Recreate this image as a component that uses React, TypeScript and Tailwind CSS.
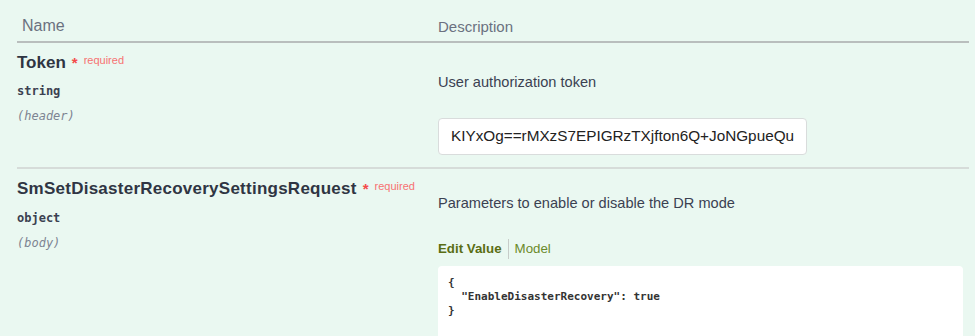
import React from "react";

const sans = "font-['Liberation_Sans',Arial,sans-serif]";
const mono = "font-['DejaVu_Sans_Mono','Liberation_Mono',monospace]";

function Required() {
  return (
    <>
      <span className="ml-1.5 text-[15px] font-bold leading-[22px] text-[#f44b4b]">*</span>
      <span className="ml-1.5 text-[11px] leading-[16px] text-[#f77272]">required</span>
    </>
  );
}

export default function App() {
  return (
    <div className={`${sans} w-[975px] h-[336px] overflow-hidden bg-[#eaf8f1] text-[#3b4151]`}>
      <div className="pl-[17px] pr-[6px]">
        <div className="flex h-[43px] items-end border-b-2 border-[#b9bebd]">
          <div className="w-[421px] pl-[5px] pb-[3px] text-[16px] text-[#6b7180]">Name</div>
          <div className="pb-[3px] text-[15px] text-[#6b7180]">Description</div>
        </div>

        <div className="flex h-[126px] border-b-2 border-[#d6dcd9]">
          <div className="w-[421px] pt-[9px]">
            <div className="flex items-start">
              <span className="text-[17px] font-bold leading-[22px] text-[#2f3543]">Token</span>
              <Required />
            </div>
            <div className={`${mono} mt-[8px] text-[12px] font-bold text-[#3b4151]`}>string</div>
            <div className={`${mono} mt-[7px] text-[12px] italic text-[#7d8492]`}>(header)</div>
          </div>
          <div className="pt-[29px]">
            <div className="text-[14.6px]">User authorization token</div>
            <input
              readOnly
              value="KIYxOg==rMXzS7EPIGRzTXjfton6Q+JoNGpueQuWbX"
              className="mt-[24px] block w-[369px] h-[37px] rounded-[4px] border border-[#d9dcdc] bg-white px-[12px] text-[15.3px] text-[#222] outline-none"
            />
          </div>
        </div>

        <div className="flex">
          <div className="w-[421px] pt-[9px]">
            <div className="flex items-start">
              <span className="text-[17px] font-bold leading-[22px] text-[#2f3543] tracking-[0.25px]">SmSetDisasterRecoverySettingsRequest</span>
              <Required />
            </div>
            <div className={`${mono} mt-[9px] text-[12px] font-bold text-[#3b4151]`}>object</div>
            <div className={`${mono} mt-[7px] text-[12px] italic text-[#7d8492]`}>(body)</div>
          </div>
          <div className="pt-[24px] flex-1">
            <div className="text-[14.6px]">Parameters to enable or disable the DR mode</div>
            <div className="mt-[24px] flex items-center text-[13.3px] leading-[20px]">
              <span className="font-bold text-[#5a6e14]">Edit Value</span>
              <span className="mx-[6px] h-[20px] w-px bg-[#c7ccc9]" />
              <span className="text-[#6a8a2a]">Model</span>
            </div>
            <div className={`${mono} mt-[7px] w-[525px] h-[80px] rounded-[4px] bg-white pl-[10px] pt-[10px] text-[11px] leading-[14px] font-bold text-[#333] whitespace-pre`}>
              {"{\n  \"EnableDisasterRecovery\": true\n}"}
            </div>
          </div>
        </div>
      </div>
    </div>
  );
}
